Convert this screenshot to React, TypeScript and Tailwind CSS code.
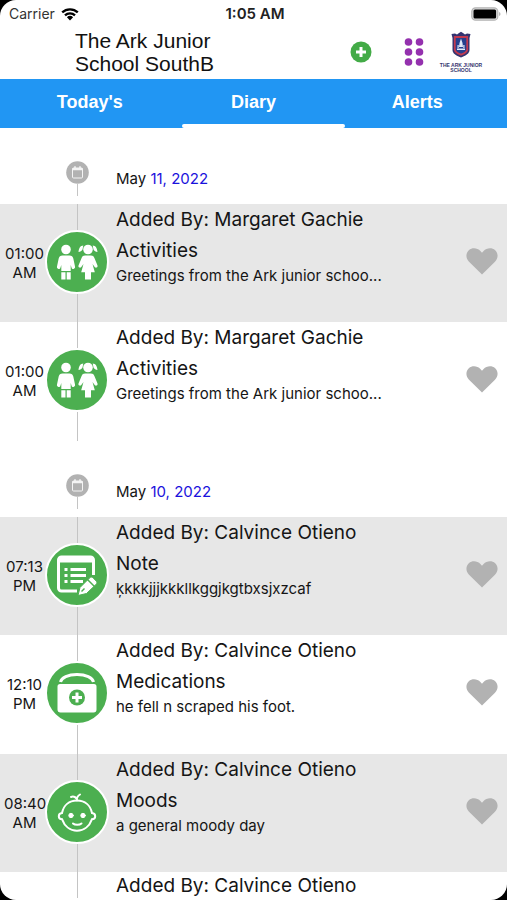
import React from "react";

type Kind = "activities" | "note" | "medications" | "moods";
type Entry = { time: string; period: string; author: string; title: string; text: string; kind: Kind; shaded: boolean };
type Day = { id: string; rest: string; entries: Entry[]; nextAuthor?: string };

const greetings = "Greetings from the Ark junior schoo...";

const days: Day[] = [
  {
    id: "may-11",
    rest: "11, 2022",
    entries: [
      { time: "01:00", period: "AM", author: "Margaret Gachie", title: "Activities", text: greetings, kind: "activities", shaded: true },
      { time: "01:00", period: "AM", author: "Margaret Gachie", title: "Activities", text: greetings, kind: "activities", shaded: false },
    ],
  },
  {
    id: "may-10",
    rest: "10, 2022",
    entries: [
      { time: "07:13", period: "PM", author: "Calvince Otieno", title: "Note", text: "ķkkkjjjkkkllkggjkgtbxsjxzcaf", kind: "note", shaded: true },
      { time: "12:10", period: "PM", author: "Calvince Otieno", title: "Medications", text: "he fell n scraped his foot.", kind: "medications", shaded: false },
      { time: "08:40", period: "AM", author: "Calvince Otieno", title: "Moods", text: "a general moody day", kind: "moods", shaded: true },
    ],
    nextAuthor: "Calvince Otieno",
  },
];

function KindIcon({ kind }: { kind: Kind }) {
  return (
    <svg viewBox="0 0 60 60" className="size-full" fill="none" aria-hidden="true">
      {kind === "activities" && (
        <g fill="#fff">
          <circle cx="19" cy="17.5" r="4.8" />
          <path d="M15.500 23.500h7c2.200 0 3.300 1 3.800 3l1.700 8c.3 1.300-.4 2.200-1.400 2.400-1 .2-1.800-.4-2.100-1.500L23.700 33v6H14.300v-6l-.8 2.400c-.3 1.100-1.100 1.700-2.100 1.500-1-.2-1.700-1.100-1.400-2.400l1.700-8c.5-2 1.600-3 3.800-3z" />
          <path d="M14.300 40.300h4.200v7.200h-4.200zM19.700 40.300h4v7.200h-4z" />
          <circle cx="41" cy="17.500" r="4.800" />
          <path d="M36.300 13.500c-3 .2-4.300 2.500-4.800 6.500 1.800-.1 3.200-1 4-2.500zM45.700 13.500c3 .2 4.300 2.500 4.800 6.500-1.800-.1-3.200-1-4-2.500z" />
          <path d="M38 23.500h6c1.700 0 2.600.8 3.400 2.400l3 7.300c.5 1.100 0 2-.8 2.400-.9.400-1.800 0-2.300-1L45.500 32l2.300 8.200H44v7.300h-6v-7.300h-3.800L36.500 32l-1.800 2.600c-.5 1-1.400 1.400-2.300 1-.8-.4-1.300-1.300-.8-2.400l3-7.300c.8-1.600 1.700-2.400 3.400-2.400z" />
        </g>
      )}
      {kind === "note" && (
        <g>
          <path d="M30 46H14.500a3 3 0 0 1-3-3v-28a3 3 0 0 1 3-3h29a3 3 0 0 1 3 3V30" stroke="#fff" strokeWidth="3" />
          <path d="M11.500 12h35v5.500h-35z" fill="#fff" />
          <path d="M17.500 24.500h3M23.500 24.500H39M17.500 30.500h3M23.500 30.500H39M17.500 36.500h3M23.500 36.500H36" stroke="#fff" strokeWidth="3" />
          <path d="m31 50.500 2-8L42.500 33c1.200-1.200 2.500-1.200 3.700 0l2.800 2.800c1.200 1.200 1.200 2.500 0 3.700L39.500 48.500z" fill="#fff" stroke="#4caf50" strokeWidth="1" />
          <path d="m40.500 34.500 7 7" stroke="#4caf50" strokeWidth="1.500" />
          <path d="m34.500 46.500 3-3" stroke="#4caf50" strokeWidth="1.500" />
        </g>
      )}
      {kind === "medications" && (
        <g>
          <path d="M13.500 19c1-4.500 7.500-7.500 16.500-7.500s15.500 3 16.500 7.500" stroke="#fff" strokeWidth="3" />
          <path d="M13 21h34a2.500 2.500 0 0 1 2.500 2.500v23c0 2-1 3-3 3h-33c-2 0-3-1-3-3v-23A2.500 2.500 0 0 1 13 21z" fill="#fff" />
          <circle cx="30" cy="34.500" r="8" fill="#4caf50" />
          <path d="M30 29.500v10M25 34.500h10" stroke="#fff" strokeWidth="3" />
        </g>
      )}
      {kind === "moods" && (
        <g stroke="#fff" strokeWidth="2" strokeLinecap="round">
          <path d="M30 18.500c-8 0-13.500 5-15 12.500-2.200.2-3.200 1.500-3.200 3.200s1 3 3.300 3.100C17.500 44 23 48.800 30 48.800s12.500-4.800 14.900-11.500c2.300-.1 3.300-1.400 3.300-3.100s-1-3-3.200-3.200C43.500 23.500 38 18.500 30 18.500z" />
          <path d="M30 18.500c-.5-2.500.5-4.500 3-6M29.500 16.500c-1.500-1.800-3.500-2.300-5.500-1.500M26 41.500c2 1.800 6.500 1.800 8.500 0" />
          <circle cx="24" cy="33.500" r="2.200" fill="#fff" strokeWidth="1" />
          <circle cx="36" cy="33.500" r="2.200" fill="#fff" strokeWidth="1" />
        </g>
      )}
    </svg>
  );
}

function CalendarBadge() {
  return (
    <svg viewBox="0 0 23 23" className="size-[23px]" aria-hidden="true">
      <circle cx="11.500" cy="11.500" r="11.300" fill="#b2b2b2" />
      <rect x="6.500" y="7" width="10" height="10" rx="1" fill="none" stroke="#f4f4f4" strokeWidth="1" />
      <path d="M6.500 7h10v2.300h-10zM8.200 5.300h1.600V8H8.200zM13.200 5.300h1.600V8h-1.600z" fill="#f4f4f4" />
    </svg>
  );
}

function SchoolCrest() {
  return (
    <div className="flex w-10 flex-col items-center">
      <svg viewBox="0 0 22 28" className="h-[28px] w-[22px]" role="img" aria-label="School crest">
        <path d="M1.500 3 5 2.500 7 3.500 9 2 11 .8 13 2l2 1.500 2-1 3.500.5-1 4v12c0 3.500-3.500 5.500-8.500 7.500-5-2-8.500-4-8.500-7.500V7z" fill="#34326f" />
        <path d="M4.800 6h12.400v12.500c0 2-2.200 3.600-6.200 5.200-4-1.600-6.200-3.200-6.200-5.200z" fill="#263f8e" stroke="#c23a50" strokeWidth="1.800" />
        <path d="M11 7.500 12.500 12l.5 4h-4l.5-4zM7 17.500h8v1.500H7zM7.500 14h1.200v3H7.500zM13.300 14h1.200v3h-1.200z" fill="#e1e9f8" />
      </svg>
      <span className="mt-1 text-center font-['Liberation_Sans',Arial,sans-serif] text-[5px] leading-[5px] font-bold whitespace-nowrap text-[#36366f]">
        THE ARK JUNIOR
        <br />
        SCHOOL
      </span>
    </div>
  );
}

function StatusBar() {
  return (
    <div className="grid h-7 grid-cols-3 items-center pr-1.5 pl-[9px]">
      <div className="flex items-center gap-1.5 text-sm text-[#333]">
        <span>Carrier</span>
        <svg viewBox="0 0 18 14" className="h-3.5 w-[18px]" role="img" aria-label="Wi-Fi">
          <path d="M1.200 5.400a11.300 11.300 0 0 1 15.600 0M4 8.400a7.200 7.200 0 0 1 10 0" fill="none" stroke="#000" strokeWidth="2.300" />
          <path d="M5.900 10.300a4.500 4.500 0 0 1 6.200 0L9 13.500z" fill="#000" />
        </svg>
      </div>
      <span className="text-center text-[15px] font-semibold text-[#222]">1:05 AM</span>
      <svg viewBox="0 0 30 14" className="h-3.5 w-[30px] justify-self-end" role="img" aria-label="Battery full">
        <rect x=".8" y=".8" width="26" height="12.400" rx="3.800" fill="#ddd" stroke="#b4b4b4" strokeWidth="1.200" />
        <rect x="2.500" y="2.500" width="22.600" height="9" rx="1.500" fill="#000" />
        <path d="M28.200 5c1.700.7 1.700 3.300 0 4z" fill="#aaa" />
      </svg>
    </div>
  );
}

function Header() {
  return (
    <header className="flex h-[51px] items-center pr-[26px] pb-1 pl-[75px]">
      <h1 className="w-40 font-['Liberation_Sans',Arial,sans-serif] text-[21px] leading-[23px] text-[#111]">The Ark Junior School SouthB</h1>
      <div className="ml-auto flex items-center">
        <button type="button" aria-label="Add entry" className="mr-8">
          <svg viewBox="0 0 22 22" className="size-[22px]">
            <circle cx="11" cy="11" r="10.500" fill="#43ab47" />
            <path d="M11 6v10M6 11h10" stroke="#fff" strokeWidth="3" />
          </svg>
        </button>
        <button type="button" aria-label="Menu" className="mr-[17px]">
          <svg viewBox="0 0 20 28" className="h-7 w-5" fill="#9431ae">
            <circle cx="4.500" cy="4" r="3.800" />
            <circle cx="15.500" cy="4" r="3.800" />
            <circle cx="4.500" cy="14" r="3.800" />
            <circle cx="15.500" cy="14" r="3.800" />
            <circle cx="4.500" cy="24" r="3.800" />
            <circle cx="15.500" cy="24" r="3.800" />
          </svg>
        </button>
        <SchoolCrest />
      </div>
    </header>
  );
}

const tabs = ["Today's", "Diary", "Alerts"];

function Tabs() {
  return (
    <nav className="flex h-[49px] bg-[#2196f3] px-2 font-['Liberation_Sans',Arial,sans-serif] text-lg font-bold text-white">
      {tabs.map((tab) => (
        <button key={tab} type="button" aria-current={tab === "Diary" ? "page" : undefined} className="relative flex-1 pb-1">
          {tab}
          {tab === "Diary" && <span className="absolute bottom-0 left-2.5 h-1 w-full rounded-xs bg-white" />}
        </button>
      ))}
    </nav>
  );
}

function DateRow({ rest }: { rest: string }) {
  return (
    <div className="flex h-[76px] pl-[45px]">
      <div className="flex w-16 flex-col items-center pt-[33px]">
        <CalendarBadge />
        <div className="h-3 w-px bg-[#c4c4c4]" />
      </div>
      <h2 className="pt-10 pl-[7px] text-[15px] leading-[22px]">
        May <span className="text-[#1a12dc]">{rest}</span>
      </h2>
    </div>
  );
}

function EntryRow({ entry }: { entry: Entry }) {
  return (
    <article className={`flex ${entry.shaded ? "h-[118px] bg-[#e7e7e7]" : "h-[119px]"}`}>
      <time className="w-[45px] shrink-0 pt-10 pl-1 text-center text-[15px] leading-[19px]">
        {entry.time}
        <br />
        {entry.period}
      </time>
      <div className="flex w-16 shrink-0 flex-col items-center">
        <div className="h-[26px] w-px bg-[#c4c4c4]" />
        <div className="size-16 shrink-0 rounded-full border-2 border-white bg-[#4caf50]">
          <KindIcon kind={entry.kind} />
        </div>
        <div className="w-px flex-1 bg-[#c4c4c4]" />
      </div>
      <div className="min-w-0 flex-1 pl-[7px]">
        <p className="text-[19px] leading-[31px]">Added By: {entry.author}</p>
        <h3 className="text-[19px] leading-[31px]">{entry.title}</h3>
        <p className="truncate text-[15px] leading-5">{entry.text}</p>
      </div>
      <button type="button" aria-label="Like" className="mt-[43px] mr-[9px] h-7 w-8 shrink-0">
        <svg viewBox="0 0 32 28" className="size-full" fill="#b2b2b2">
          <path d="M16 27.500 3 14.800C-.6 11.200-.2 6 2.800 3.300c3.400-3 8.600-2.400 11.600.7L16 5.700 17.600 4c3-3.100 8.200-3.700 11.600-.7 3 2.700 3.400 7.900-.2 11.500z" />
        </svg>
      </button>
    </article>
  );
}

function NextEntry({ author }: { author: string }) {
  return (
    <div className="flex pl-[45px]">
      <div className="flex w-16 shrink-0 justify-center">
        <div className="h-[26px] w-px bg-[#c4c4c4]" />
      </div>
      <p className="pl-[7px] text-[19px] leading-7">Added By: {author}</p>
    </div>
  );
}

export default function App() {
  return (
    <div className="h-screen overflow-hidden bg-black">
      <div className="h-full overflow-hidden rounded-2xl bg-white font-[Inter,'Liberation_Sans',sans-serif] text-[#151515]">
        <StatusBar />
        <Header />
        <Tabs />
        <main>
          {days.map((day) => (
            <section key={day.id}>
              <DateRow rest={day.rest} />
              {day.entries.map((entry, i) => (
                <EntryRow key={i} entry={entry} />
              ))}
              {day.nextAuthor && <NextEntry author={day.nextAuthor} />}
            </section>
          ))}
        </main>
      </div>
    </div>
  );
}
